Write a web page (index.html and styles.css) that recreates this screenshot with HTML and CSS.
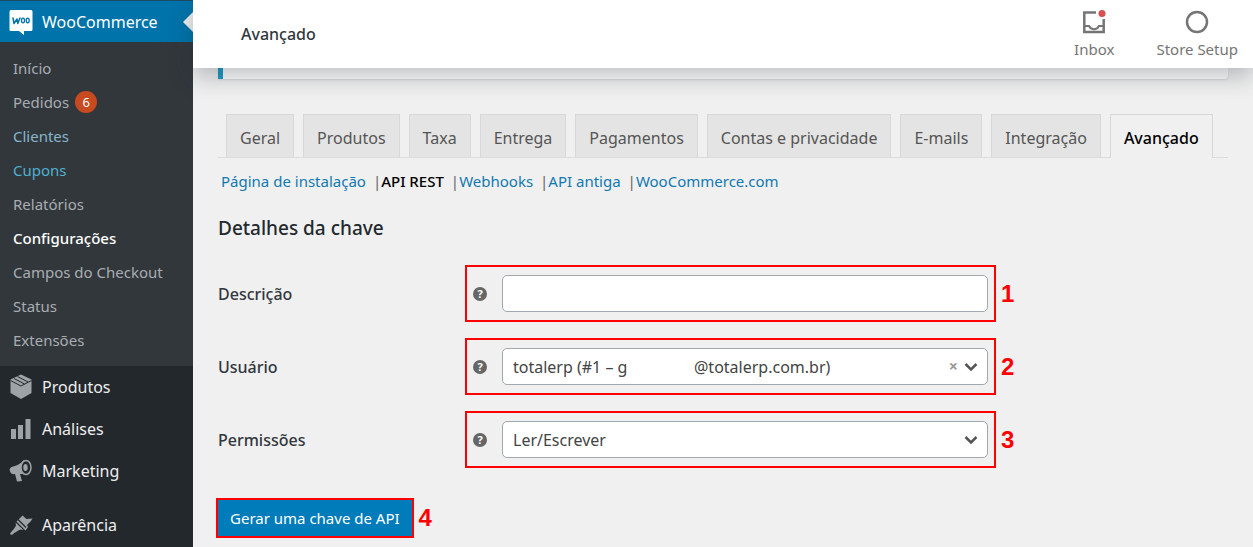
FILE: index.html
```html
<!DOCTYPE html>
<html lang="pt-BR">
<head>
    <meta charset="UTF-8">
    <meta name="viewport" content="width=device-width, initial-scale=1.0">
    <title>WooCommerce - Avançado</title>
    <link rel="stylesheet" href="styles.css">
</head>
<body>
    <nav class="sidebar">
        <a href="#" class="menu-item current">
            <svg class="menu-icon woo" viewBox="0 0 24 26" width="24" height="26">
                <path fill="#fff" d="M2 1h20a1.500 1.500 0 0 1 1.500 1.500v18a1.500 1.500 0 0 1-1.500 1.500h-7v4l-5-4H2a1.500 1.500 0 0 1-1.500-1.500v-18A1.500 1.500 0 0 1 2 1z"/>
                <path fill="none" stroke="#0073aa" stroke-width="1.500" stroke-linecap="round" stroke-linejoin="round" d="M4 9l1 5.500 3-4.500.8 4.500L11 9"/>
                <ellipse cx="14" cy="11.500" rx="1.500" ry="2.300" fill="none" stroke="#0073aa" stroke-width="1.300"/>
                <ellipse cx="18.700" cy="11.500" rx="1.500" ry="2.300" fill="none" stroke="#0073aa" stroke-width="1.300"/>
            </svg>
            WooCommerce
        </a>
        <ul class="submenu">
            <li><a href="#">Início</a></li>
            <li><a href="#">Pedidos <span class="count">6</span></a></li>
            <li><a href="#" class="visited">Clientes</a></li>
            <li><a href="#" class="hover">Cupons</a></li>
            <li><a href="#">Relatórios</a></li>
            <li><a href="#" class="active">Configurações</a></li>
            <li><a href="#">Campos do Checkout</a></li>
            <li><a href="#">Status</a></li>
            <li><a href="#">Extensões</a></li>
        </ul>
        <a href="#" class="menu-item">
            <svg class="menu-icon" viewBox="0 0 24 26" width="24" height="26">
                <path fill="#9ea3a8" d="M12 .5l10.500 5v13.500L12 25 1.500 19V5.500z"/>
                <path fill="none" stroke="#23282d" stroke-width="1" d="M1.500 6.500L12 12l10.500-5.500M5 4.500l10.500 5.500M8.500 2.500L19 8"/>
            </svg>
            Produtos
        </a>
        <a href="#" class="menu-item">
            <svg class="menu-icon" viewBox="0 0 24 24" width="24" height="24">
                <path fill="#9ea3a8" d="M2 12h5v10H2zM9 8h5v14H9zM16.500 2H21.500v20h-5z"/>
            </svg>
            Análises
        </a>
        <a href="#" class="menu-item">
            <svg class="menu-icon" viewBox="0 0 24 24" width="24" height="24">
                <path fill="#9ea3a8" d="M15 1C12 4 9 6.500 4 7.500 1 8.200 0 10 1 12.500c.8 2 2.500 3 5 2.500l2 7.500 5-.5-2-7c2 0 3.500.3 6 .5z"/>
                <ellipse cx="17" cy="8.500" rx="5" ry="7" fill="#23282d" stroke="#9ea3a8" stroke-width="1.500"/>
                <ellipse cx="16.500" cy="8.500" rx="2.200" ry="3.500" fill="#9ea3a8"/>
            </svg>
            Marketing
        </a>
        <a href="#" class="menu-item spaced">
            <svg class="menu-icon" viewBox="0 0 24 24" width="24" height="24">
                <path fill="#9ea3a8" d="M13.500 2.500l4 3.500 6-.5c-1.500 3-3.500 4.500-5.500 6.500l1 2-2.500 3.500-9-9zM6.500 9.500l8 7.500-3-.5c-3 1-5.500 3-8 5-1.500.8-3-.3-2-1.700C3.500 17.500 6 15 7 12.500z"/>
                <path stroke="#23282d" stroke-width="1.200" d="M9 6.500l8 8"/>
            </svg>
            Aparência
        </a>
    </nav>

    <div class="content">
        <header class="topbar">
            <h1>Avançado</h1>
            <div class="activity">
                <button type="button" class="inbox">
                    <svg viewBox="0 0 24 24" width="24" height="24">
                        <path fill="none" stroke="#757575" stroke-width="2.500" d="M14 2.500H2.300V22h19.400V9"/>
                        <path fill="none" stroke="#757575" stroke-width="2" d="M2 16h5c1 2 2.500 3.200 5 3.200S16 18 17 16h5"/>
                        <circle cx="20" cy="3.500" r="3.500" fill="#d94f4f"/>
                    </svg>
                    Inbox
                </button>
                <button type="button">
                    <svg viewBox="0 0 24 24" width="24" height="24">
                        <circle cx="12" cy="12" r="10" fill="none" stroke="#757575" stroke-width="2.500"/>
                    </svg>
                    Store Setup
                </button>
            </div>
        </header>
        <main>
            <div class="notice"></div>

            <nav class="tabs">
                <a href="#">Geral</a>
                <a href="#">Produtos</a>
                <a href="#">Taxa</a>
                <a href="#">Entrega</a>
                <a href="#">Pagamentos</a>
                <a href="#">Contas e privacidade</a>
                <a href="#">E-mails</a>
                <a href="#">Integração</a>
                <a href="#" class="active">Avançado</a>
            </nav>

            <ul class="sections">
                <li><a href="#">Página de instalação</a></li>
                <li><a href="#" class="active">API REST</a></li>
                <li><a href="#">Webhooks</a></li>
                <li><a href="#">API antiga</a></li>
                <li><a href="#">WooCommerce.com</a></li>
            </ul>

            <h2>Detalhes da chave</h2>

            <form id="keyForm">
                <div class="row">
                    <label for="description">Descrição</label>
                    <div class="marked">
                        <span class="help">?</span>
                        <div class="field"><input type="text" id="description" name="description"></div>
                    </div>
                    <span class="step">1</span>
                </div>
                <div class="row">
                    <label for="user">Usuário</label>
                    <div class="marked">
                        <span class="help">?</span>
                        <div class="field">
                            <select id="user" name="user">
                                <option>totalerp (#1 – g&nbsp;&nbsp;&nbsp;&nbsp;&nbsp;&nbsp;&nbsp;&nbsp;&nbsp;&nbsp;&nbsp;&nbsp;&nbsp;&nbsp;&nbsp;&nbsp;@totalerp.com.br)</option>
                            </select>
                            <button type="button" class="clear" aria-label="Limpar">×</button>
                            <svg class="arrow" viewBox="0 0 14 10" width="14" height="10"><path d="M1.500 2L7 7.500 12.500 2"/></svg>
                        </div>
                    </div>
                    <span class="step">2</span>
                </div>
                <div class="row">
                    <label for="permissions">Permissões</label>
                    <div class="marked">
                        <span class="help">?</span>
                        <div class="field">
                            <select id="permissions" name="permissions">
                                <option>Ler/Escrever</option>
                            </select>
                            <svg class="arrow" viewBox="0 0 14 10" width="14" height="10"><path d="M1.500 2L7 7.500 12.500 2"/></svg>
                        </div>
                    </div>
                    <span class="step">3</span>
                </div>
                <div class="actions">
                    <button type="submit" class="generate">Gerar uma chave de API</button>
                    <span class="step">4</span>
                </div>
            </form>
        </main>
    </div>
</body>
</html>
```

FILE: styles.css
```css
* {
    box-sizing: border-box;
}
body {
    margin: 0;
    display: flex;
    min-height: 100vh;
    background: #f0f0f0;
    color: #32373c;
    font-family: "Noto Sans", "Open Sans", sans-serif;
    font-size: 16px;
}
a {
    text-decoration: none;
}
ul {
    list-style: none;
    margin: 0;
    padding: 0;
}
button {
    font-family: inherit;
    cursor: pointer;
}

/* Sidebar */
.sidebar {
    flex: 0 0 193px;
    background: #23282d;
}
.menu-item {
    display: flex;
    align-items: center;
    gap: 9px;
    height: 42px;
    padding-left: 9px;
    color: #eee;
    font-size: 16px;
}
.menu-item.current {
    position: relative;
    background: #0073aa;
    border-top: 1px solid #1d4a63;
    color: #fff;
}
.menu-item.current::after {
    content: "";
    position: absolute;
    right: 0;
    top: 11px;
    border: 10px solid transparent;
    border-left: 0;
    border-right-color: #f0f0f0;
}
.menu-item.spaced {
    margin-top: 12px;
}
.submenu {
    padding: 9px 0;
    background: #32373c;
}
.submenu a {
    display: flex;
    align-items: center;
    gap: 6px;
    height: 34px;
    padding-left: 13px;
    color: #a8adb2;
    font-size: 15px;
}
.submenu .visited {
    color: #86b6ca;
}
.submenu .hover {
    color: #4fb0d0;
}
.submenu .active {
    color: #fff;
    font-weight: 500;
}
.count {
    width: 22px;
    height: 22px;
    border-radius: 50%;
    background: #ca4a1f;
    color: #fff;
    font-size: 13px;
    line-height: 22px;
    text-align: center;
}

/* Top bar */
.content {
    flex: 1;
    min-width: 0;
}
.topbar {
    position: relative;
    display: flex;
    justify-content: space-between;
    align-items: center;
    height: 68px;
    padding: 0 15px 0 48px;
    background: #fff;
    box-shadow: 0 8px 24px rgba(30, 40, 50, 0.3);
}
.topbar h1 {
    margin: 0;
    font-size: 16px;
    font-weight: 500;
}
.activity {
    display: flex;
    gap: 42px;
}
.activity button {
    display: flex;
    flex-direction: column;
    align-items: center;
    gap: 5px;
    padding: 0;
    border: 0;
    background: none;
    color: #757575;
    font-size: 15px;
    line-height: 20px;
}

/* Settings page */
main {
    padding: 0 25px;
}
.notice {
    height: 11px;
    border-left: 5px solid #1e9bc8;
    border-radius: 0 0 4px 0;
    background: #fff;
    box-shadow: 0 1px 2px rgba(0, 0, 0, 0.1);
}
.tabs {
    display: flex;
    gap: 9px;
    margin-top: 35px;
    padding-left: 8px;
    border-bottom: 1px solid #dcdcdc;
}
.tabs a {
    height: 43px;
    padding: 0 13px;
    border: 1px solid #d8d8d8;
    border-bottom: 0;
    background: #e4e4e4;
    color: #555;
    line-height: 46px;
    white-space: nowrap;
}
.tabs .active {
    height: 44px;
    margin-bottom: -1px;
    background: #f0f0f0;
    color: #000;
    font-weight: 500;
}
.sections {
    display: flex;
    padding: 11px 3px 0;
    color: #666;
    font-size: 15px;
    line-height: 24px;
}
.sections li + li::before {
    content: "|";
    margin-left: 7px;
}
.sections a {
    color: #1079b0;
}
.sections .active {
    color: #000;
    font-weight: 500;
}
h2 {
    margin: 21px 0 23px;
    color: #23282d;
    font-size: 19px;
    font-weight: 500;
    line-height: 28px;
}
.row {
    display: grid;
    grid-template-columns: 247px minmax(0, 531px) auto;
    align-items: center;
    margin-bottom: 16px;
}
.row label {
    font-weight: 500;
}
.marked {
    display: flex;
    align-items: center;
    gap: 15px;
    padding: 8px 6px;
    border: 2px solid #f00;
}
.help {
    width: 14px;
    height: 14px;
    border-radius: 50%;
    background: #666;
    color: #fff;
    font-size: 11px;
    font-weight: bold;
    line-height: 14px;
    text-align: center;
}
.field {
    position: relative;
    flex: 1;
}
.field input,
.field select {
    display: block;
    width: 100%;
    height: 37px;
    padding: 0 10px;
    border: 1px solid #a0a8b0;
    border-radius: 5px;
    background: #fff;
    color: #444;
    font-family: inherit;
    font-size: 16px;
    appearance: none;
}
.arrow {
    position: absolute;
    right: 10px;
    top: 14px;
    fill: none;
    stroke: #555;
    stroke-width: 2.5;
    pointer-events: none;
}
.clear {
    position: absolute;
    right: 30px;
    top: 8px;
    padding: 0;
    border: 0;
    background: none;
    color: #999;
    font-size: 16px;
    font-weight: bold;
    line-height: 20px;
}
.step {
    margin-left: 5px;
    color: #f00;
    font-family: "Liberation Sans", Arial, sans-serif;
    font-size: 24px;
    font-weight: bold;
}
.actions {
    display: flex;
    align-items: center;
    margin-top: 30px;
    margin-left: -2px;
}
.generate {
    height: 40px;
    padding: 0 12px;
    border: 2px solid #f00;
    background: #007cba;
    color: #fff;
    font-size: 15px;
}
```
